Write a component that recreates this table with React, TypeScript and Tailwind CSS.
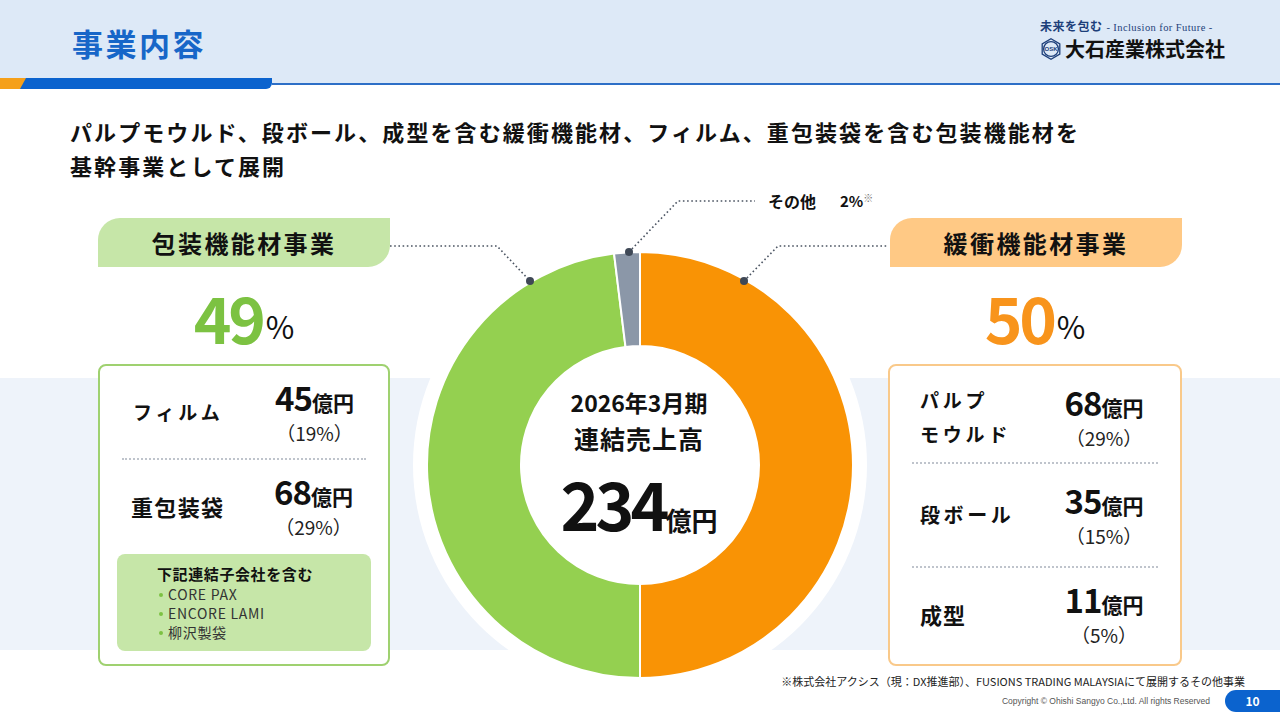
import React from "react";

const CX = 250;
const CY = 283;

const pt = (r: number, deg: number) => {
  const a = (deg * Math.PI) / 180;
  return [CX + r * Math.sin(a), CY - r * Math.cos(a)];
};

const seg = (s: number, e: number, R: number, r: number) => {
  const large = e - s > 180 ? 1 : 0;
  const [x1, y1] = pt(R, s);
  const [x2, y2] = pt(R, e);
  const [x3, y3] = pt(r, e);
  const [x4, y4] = pt(r, s);
  return `M${x1} ${y1} A${R} ${R} 0 ${large} 1 ${x2} ${y2} L${x3} ${y3} A${r} ${r} 0 ${large} 0 ${x4} ${y4}Z`;
};

const Logo = () => (
  <div className="flex flex-col items-start">
    <div className="flex items-baseline gap-[4px] text-[#1d3f7a]">
      <span className="text-[12px] font-bold tracking-[0.04em]">未来を包む</span>
      <span className="font-['Liberation_Serif',serif] text-[10.5px] tracking-[0.04em]">
        - Inclusion for Future -
      </span>
    </div>
    <div className="mt-[1px] flex items-center gap-[3px]">
      <svg width="22" height="22" viewBox="0 0 22 22">
        <polygon
          points="11,0.8 19.8,5.9 19.8,16.1 11,21.2 2.2,16.1 2.2,5.9"
          fill="none"
          stroke="#1d3f7a"
          strokeWidth="1.3"
        />
        <circle cx="11" cy="11" r="7.4" fill="none" stroke="#1d3f7a" strokeWidth="1.3" />
        <text x="11" y="13.2" textAnchor="middle" fontSize="6" fontWeight="700" fill="#1d3f7a" fontFamily="Liberation Sans, sans-serif">
          OSK
        </text>
      </svg>
      <span className="text-[20px] font-bold leading-[24px] text-[#111]">大石産業株式会社</span>
    </div>
  </div>
);

const Row = ({
  label,
  amount,
  pct,
  labelClass,
}: {
  label: React.ReactNode;
  amount: string;
  pct: string;
  labelClass: string;
}) => (
  <div className="flex flex-1 items-center">
    <div className={`w-[140px] font-bold text-[#111] ${labelClass}`}>{label}</div>
    <div className="flex flex-1 flex-col items-center pr-[32px]">
      <div className="flex items-baseline leading-[36px]">
        <span className="text-[33px] font-bold tracking-[-0.03em]">{amount}</span>
        <span className="text-[21px] font-bold">億円</span>
      </div>
      <div className="text-[19px] leading-[26px] text-[#222]">{pct}</div>
    </div>
  </div>
);

const Dots = () => (
  <div className="mx-[22px] h-0 border-t-2 border-dotted border-[#bfc4cc]" />
);

const Donut = () => (
  <svg width="498" height="490" viewBox="0 0 498 490" className="overflow-visible">
    <circle cx={CX} cy={CY} r="227" fill="#ffffff" />
    <path d={seg(0, 180, 213, 119)} fill="#f99305" stroke="#ffffff" strokeWidth="2" />
    <path d={seg(180, 353, 213, 119)} fill="#94d050" stroke="#ffffff" strokeWidth="2" />
    <path d={seg(353, 360, 213, 119)} fill="#8b97a8" stroke="#ffffff" strokeWidth="2" />
    <g fill="none" stroke="#4b5462" strokeWidth="1.6" strokeDasharray="1.6 2.6">
      <polyline points="0,64 107,64 140,99" />
      <polyline points="239,70 288,19 365,19" />
      <polyline points="354,99 388,64 498,64" />
    </g>
    <g fill="#3f4856">
      <circle cx="140" cy="99" r="4" />
      <circle cx="239" cy="70" r="4" />
      <circle cx="354" cy="99" r="4" />
    </g>
  </svg>
);

export default function App() {
  return (
    <div className="flex h-[720px] w-[1280px] flex-col overflow-hidden bg-white font-['Noto_Sans_CJK_JP',sans-serif] text-[#111]">
      {/* header */}
      <div className="flex h-[78px] items-center justify-between bg-[#dde9f7] pl-[72px] pr-[55px]">
        <h1 className="pt-[8px] text-[31px] font-bold tracking-[0.08em] text-[#1766c8]">事業内容</h1>
        <Logo />
      </div>
      <div className="flex h-[11px]">
        <div className="flex w-[272px]">
          <div className="w-[26px] bg-[#f5a01a]" />
          <div className="-ml-[6px] flex-1 rounded-br-[6px] bg-[#0b63ce] [clip-path:polygon(6px_0,100%_0,100%_100%,0_100%)]" />
        </div>
        <div className="flex flex-1 flex-col">
          <div className="h-[5px] bg-[#dde9f7]" />
          <div className="h-[2px] bg-[#2d6fc7]" />
        </div>
      </div>

      {/* lead */}
      <div className="pl-[70px] pt-[25px] text-[22px] font-bold leading-[34px] tracking-[0.095em]">
        <p>パルプモウルド、段ボール、成型を含む緩衝機能材、フィルム、重包装袋を含む包装機能材を</p>
        <p>基幹事業として展開</p>
      </div>

      {/* main */}
      <div className="flex h-[490px] bg-[linear-gradient(to_bottom,transparent_196px,#eef3fa_196px,#eef3fa_468px,transparent_468px)] pl-[98px]">
        {/* left */}
        <div className="flex w-[292px] flex-col pt-[36px]">
          <div className="flex h-[49px] items-center justify-center rounded-tl-[22px] rounded-br-[22px] bg-[#c6e6a8] text-[24px] font-bold tracking-[0.1em]">
            包装機能材事業
          </div>
          <div className="flex h-[97px] items-center justify-center">
            <span className="text-[64px] font-bold leading-none tracking-[-0.05em] text-[#7cc242]">49</span>
            <span className="ml-[3px] mt-[20px] text-[31px] leading-none">%</span>
          </div>
          <div className="flex h-[302px] flex-col rounded-[8px] border-2 border-[#9fd170] bg-white pb-[13px]">
            <div className="flex h-[92px] pl-[33px]">
              <Row label="フィルム" amount="45" pct="（19%）" labelClass="text-[19px] tracking-[0.2em]" />
            </div>
            <Dots />
            <div className="flex h-[92px] pl-[31px]">
              <Row label="重包装袋" amount="68" pct="（29%）" labelClass="text-[22px] tracking-[0.06em]" />
            </div>
            <div className="mx-[17px] mt-[2px] flex-1 rounded-[8px] bg-[#c6e6a8] pl-[40px] pt-[9px]">
              <p className="text-[15px] font-bold leading-[22px] tracking-[0.04em]">下記連結子会社を含む</p>
              <ul className="text-[14px] leading-[19px] tracking-[0.05em] text-[#333]">
                {["CORE PAX", "ENCORE LAMI", "柳沢製袋"].map((t) => (
                  <li key={t} className="flex items-center">
                    <span className="ml-[2px] mr-[5px] h-[4px] w-[4px] rounded-full bg-[#7cc242]" />
                    {t}
                  </li>
                ))}
              </ul>
            </div>
          </div>
        </div>

        {/* center */}
        <div className="relative w-[498px]">
          <Donut />
          <div className="absolute left-[378px] top-[7px] flex items-center whitespace-nowrap">
            <span className="text-[16px] font-bold">その他</span>
            <span className="ml-[24px] text-[15px] font-bold">2%</span>
            <span className="-mt-[8px] text-[10px] text-[#777]">※</span>
          </div>
          <div className="absolute left-0 top-[202px] flex w-full flex-col items-center font-bold">
            <div className="text-[23px] leading-[36px]">2026年3月期</div>
            <div className="text-[25px] leading-[36px] tracking-[0.04em]">連結売上高</div>
            <div className="mt-[16px] flex items-baseline leading-[60px]">
              <span className="text-[66px] tracking-[-0.06em]">234</span>
              <span className="text-[26px]">億円</span>
            </div>
          </div>
        </div>

        {/* right */}
        <div className="flex w-[294px] flex-col pt-[36px]">
          <div className="ml-[2px] flex h-[49px] items-center justify-center rounded-tl-[22px] rounded-br-[22px] bg-[#ffc985] text-[24px] font-bold tracking-[0.1em]">
            緩衝機能材事業
          </div>
          <div className="flex h-[97px] items-center justify-center">
            <span className="text-[64px] font-bold leading-none tracking-[-0.05em] text-[#f8941c]">50</span>
            <span className="ml-[3px] mt-[20px] text-[31px] leading-none">%</span>
          </div>
          <div className="flex h-[302px] flex-col rounded-[8px] border-2 border-[#f9c98a] bg-white pb-[4px]">
            <div className="flex h-[96px] pl-[30px] pt-[6px]">
              <Row
                label={
                  <span className="leading-[34px]">
                    パルプ
                    <br />
                    モウルド
                  </span>
                }
                amount="68"
                pct="（29%）"
                labelClass="text-[19px] tracking-[0.2em]"
              />
            </div>
            <Dots />
            <div className="flex h-[102px] pl-[30px]">
              <Row label="段ボール" amount="35" pct="（15%）" labelClass="text-[20px] tracking-[0.18em]" />
            </div>
            <Dots />
            <div className="flex flex-1 pl-[30px]">
              <Row label="成型" amount="11" pct="（5%）" labelClass="text-[22px] tracking-[0.04em]" />
            </div>
          </div>
        </div>
      </div>

      {/* footer */}
      <div className="h-[18px] pr-[35px] text-right text-[11px] leading-[18px] text-[#222]">
        ※株式会社アクシス（現：DX推進部）、FUSIONS TRADING MALAYSIAにて展開するその他事業
      </div>
      <div className="flex h-[22px] items-center justify-end">
        <span className="mr-[15px] font-['Liberation_Sans',sans-serif] text-[8.5px] text-[#555]">
          Copyright © Ohishi Sangyo Co.,Ltd. All rights Reserved
        </span>
        <div className="flex h-[22px] w-[55px] items-center justify-center rounded-l-full bg-[#0b63ce] text-[12px] font-bold text-white">
          10
        </div>
      </div>
    </div>
  );
}
